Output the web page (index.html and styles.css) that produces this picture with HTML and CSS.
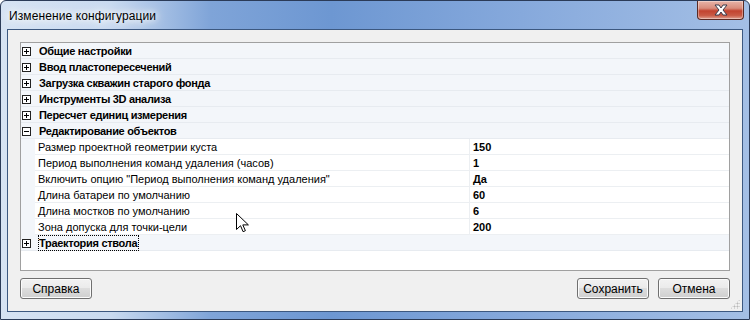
FILE: index.html
```html
<!DOCTYPE html>
<html>
<head>
<meta charset="utf-8">
<link rel="stylesheet" href="styles.css">
</head>
<body>
<div class="window">
  <div class="titlebar">
    <div class="title">Изменение конфигурации</div>
    <div class="close"><svg width="16" height="12" viewBox="0 0 16 12"><path d="M2 1h4l2 3 2-3h4l-4 5 4 5h-4l-2-3-2 3H2l4-5z" fill="#fff" stroke="#3a3a4a" stroke-width="1"/></svg></div>
  </div>
  <div class="client">
    <div class="tree">
      <div class="row group"><span class="exp"></span><span class="glabel">Общие настройки</span></div>
      <div class="row group"><span class="exp"></span><span class="glabel">Ввод пластопересечений</span></div>
      <div class="row group"><span class="exp"></span><span class="glabel">Загрузка скважин старого фонда</span></div>
      <div class="row group"><span class="exp"></span><span class="glabel">Инструменты 3D анализа</span></div>
      <div class="row group"><span class="exp"></span><span class="glabel">Пересчет единиц измерения</span></div>
      <div class="row group"><span class="exp minus"></span><span class="glabel">Редактирование объектов</span></div>
      <div class="row child"><span class="name">Размер проектной геометрии куста</span><span class="val">150</span></div>
      <div class="row child"><span class="name">Период выполнения команд удаления (часов)</span><span class="val">1</span></div>
      <div class="row child"><span class="name">Включить опцию "Период выполнения команд удаления"</span><span class="val">Да</span></div>
      <div class="row child"><span class="name">Длина батареи по умолчанию</span><span class="val">60</span></div>
      <div class="row child"><span class="name">Длина мостков по умолчанию</span><span class="val">6</span></div>
      <div class="row child"><span class="name">Зона допуска для точки-цели</span><span class="val">200</span></div>
      <div class="row group"><span class="exp"></span><span class="glabel focus">Траектория ствола</span></div>
    </div>
    <div class="buttons">
      <button class="btn">Справка</button>
      <div class="spacer"></div>
      <button class="btn">Сохранить</button>
      <button class="btn">Отмена</button>
    </div>
    <div class="grip"></div>
  </div>
  <svg class="cursor" width="13" height="21" viewBox="0 0 13 21"><path d="M0.5 0.5v16l4-3.8 2.6 6 2.3-1-2.6-5.8h5.6z" fill="#fff" stroke="#000" stroke-width="1"/></svg>
</div>
</body>
</html>
```

FILE: styles.css
```css
* { box-sizing: border-box; }
html, body { margin: 0; padding: 0; }
body { width: 750px; height: 320px; overflow: hidden; background: #fff; font-family: "Liberation Sans", Arial, sans-serif; }

.window {
  position: relative;
  width: 750px;
  height: 320px;
  border: 1px solid #2b3b58;
  border-radius: 6px 6px 0 0;
  padding: 0 6px 7px 6px;
  display: flex;
  flex-direction: column;
  background:
    linear-gradient(90deg, #d6e3f3 0px, #c9daf0 110px, #7fa4d8 210px, #6d97d2 330px, #86a9dc 520px, #a4bfe5 750px);
}

.titlebar {
  height: 28px;
  display: flex;
  align-items: flex-start;
  justify-content: space-between;
  position: relative;
}
.title {
  margin-top: 8px;
  margin-left: 2px;
  font-family: "Liberation Sans", Arial, sans-serif;
  font-size: 12px;
  color: #000;
  line-height: 14px;
  letter-spacing: 0.1px;
  text-shadow: 0 0 6px #fff, 0 0 10px #fff, 0 0 14px #eef4fb;
}
.close {
  width: 47px;
  height: 19px;
  margin-right: -1px;
  border: 1px solid #5a2a24;
  border-top: none;
  border-radius: 0 0 4px 4px;
  background: linear-gradient(180deg, #e8b4a8 0%, #d98c7c 40%, #c2432f 55%, #c95a45 80%, #e0a090 100%);
  display: flex;
  align-items: center;
  justify-content: center;
  box-shadow: inset 0 0 0 1px rgba(255,255,255,0.35);
}

.client {
  flex: 1;
  position: relative;
  border: 1px solid #3c5880;
  background: #f0f0f0;
  padding: 12px 12px 12px 12px;
  display: flex;
  flex-direction: column;
}

.tree {
  height: 229px;
  border: 1px solid #a0a0a0;
  background: #fff;
  font-size: 11px;
  color: #000;
}
.row {
  height: 16px;
  display: flex;
  align-items: center;
  line-height: 15px;
}
.group {
  background: #f3f6fa;
  border-bottom: 1px solid #e7ebf0;
}
.exp {
  width: 9px;
  height: 9px;
  border: 1px solid #222;
  margin-left: 1px;
  margin-top: 1px;
  background: #fff;
  position: relative;
}
.exp::before {
  content: "";
  position: absolute;
  left: 1px; top: 3px;
  width: 5px; height: 1px;
  background: #000;
}
.exp:not(.minus)::after {
  content: "";
  position: absolute;
  left: 3px; top: 1px;
  width: 1px; height: 5px;
  background: #000;
}
.glabel {
  margin-left: 8px;
  padding-top: 2px;
  font-weight: bold;
  letter-spacing: -0.3px;
}
.focus {
  outline: 1px dotted #000;
  outline-offset: 0;
  padding: 1px 1px 0 0;
  line-height: 13px;
  margin-top: 1px;
}
.child {
  background: linear-gradient(90deg, #f3f6fa 0, #f3f6fa 14px, #fff 14px);
}
.child .name {
  width: 435px;
  margin-left: 14px;
  padding-left: 3px;
  padding-top: 1px;
  height: 16px;
  border-bottom: 1px solid #eceff2;
  border-right: 1px solid #eceff2;
  white-space: nowrap;
}
.child .val {
  flex: 1;
  height: 16px;
  padding-left: 3px;
  padding-top: 1px;
  font-weight: bold;
  border-bottom: 1px solid #eceff2;
}

.buttons {
  margin-top: 7px;
  display: flex;
  gap: 9px;
}
.spacer { flex: 1; }
.btn {
  width: 72px;
  height: 21px;
  border: 1px solid #707070;
  border-radius: 3px;
  background: linear-gradient(180deg, #f2f2f2 0%, #ebebeb 45%, #dddddd 50%, #cfcfcf 100%);
  box-shadow: inset 0 0 0 1px #fbfbfb;
  font-family: "Liberation Sans", Arial, sans-serif;
  font-size: 12px;
  color: #000;
  padding: 0;
  line-height: 18px;
}

.grip {
  position: absolute;
  right: 2px;
  bottom: 2px;
  width: 10px;
  height: 10px;
  background:
    radial-gradient(circle, #b8b8b8 0.8px, transparent 1.2px) 0 0 / 3px 3px;
  clip-path: polygon(100% 0, 100% 100%, 0 100%);
}

.cursor {
  position: absolute;
  left: 235px;
  top: 212px;
}
```
